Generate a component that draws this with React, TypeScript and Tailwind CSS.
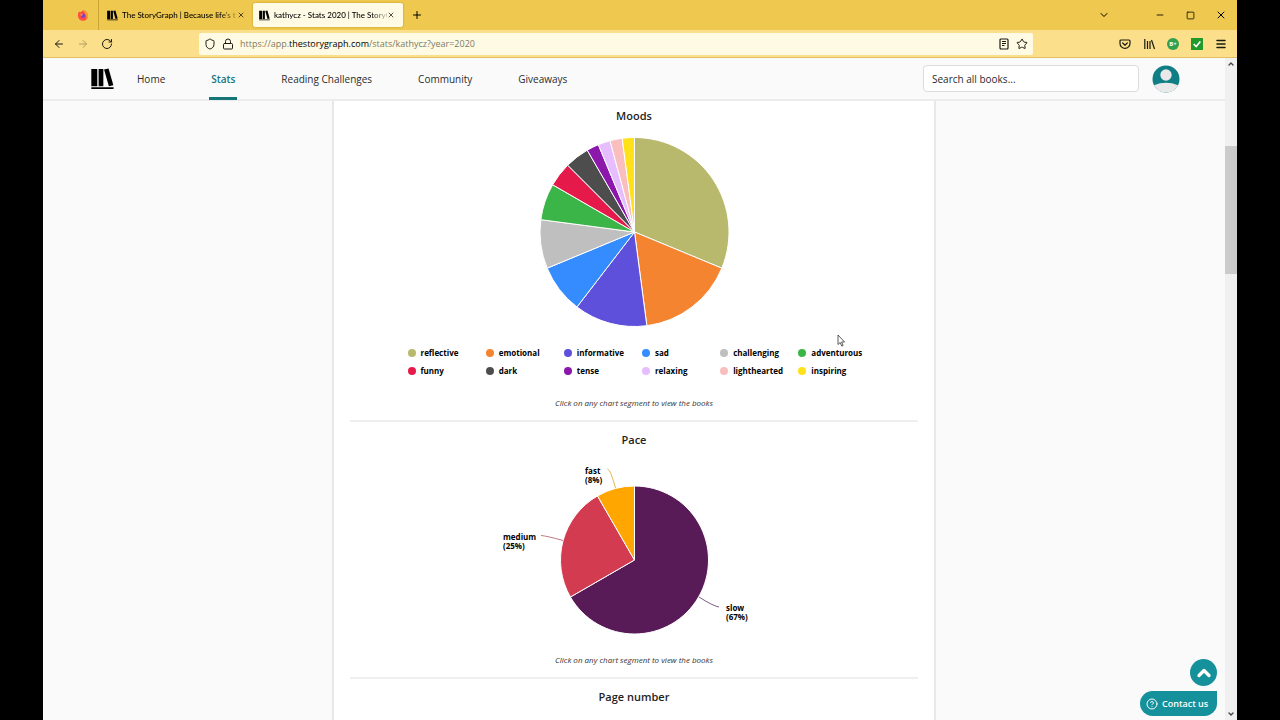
import React from 'react';
import { ArrowLeft, ArrowRight, ChevronDown, ChevronUp, CircleHelp, Lock, Menu, Minus, Plus, RotateCw, Shield, Square, Star, X } from 'lucide-react';

type Slice = { name: string; value: number; color: string };

const moods: Slice[] = [
  { name: 'reflective', value: 15, color: '#b8b96c' },
  { name: 'emotional', value: 8, color: '#f58430' },
  { name: 'informative', value: 6, color: '#5f50dc' },
  { name: 'sad', value: 4, color: '#358cff' },
  { name: 'challenging', value: 4, color: '#bfbfbf' },
  { name: 'adventurous', value: 3, color: '#3cb548' },
  { name: 'funny', value: 2, color: '#e6194b' },
  { name: 'dark', value: 2, color: '#4d4d4d' },
  { name: 'tense', value: 1, color: '#8c18ab' },
  { name: 'relaxing', value: 1, color: '#e6beff' },
  { name: 'lighthearted', value: 1, color: '#fabebe' },
  { name: 'inspiring', value: 1, color: '#ffe119' },
];

const pace: Slice[] = [
  { name: 'slow', value: 8, color: '#581b58' },
  { name: 'medium', value: 3, color: '#d33b51' },
  { name: 'fast', value: 1, color: '#ffa600' },
];

const navLinks = ['Home', 'Stats', 'Reading Challenges', 'Community', 'Giveaways'];

const Pie: React.FC<{ data: Slice[]; cx: number; cy: number; r: number }> = ({ data, cx, cy, r }) => {
  const total = data.reduce((sum, d) => sum + d.value, 0);
  let used = 0;
  return (
    <g stroke="#fff" strokeWidth="1" strokeLinejoin="round">
      {data.map((d) => {
        const start = (used / total) * 2 * Math.PI;
        used += d.value;
        const end = (used / total) * 2 * Math.PI;
        const large = end - start > Math.PI ? 1 : 0;
        const path = `M${cx} ${cy}L${cx + r * Math.sin(start)} ${cy - r * Math.cos(start)}A${r} ${r} 0 ${large} 1 ${cx + r * Math.sin(end)} ${cy - r * Math.cos(end)}Z`;
        return <path key={d.name} d={path} fill={d.color} />;
      })}
    </g>
  );
};

const BooksLogo: React.FC<{ className?: string }> = ({ className }) => (
  <svg viewBox="0 0 22 21" className={className} fill="currentColor" aria-hidden="true">
    <path d="M.3 1H6v16.500H.3zM7.300 1h4.500v16.500H7.300zM12.500 1.500l4.300-1 4.600 16-4.300 1zM.3 18.500h21.300V20H.3z" />
  </svg>
);

const FirefoxLogo: React.FC = () => (
  <svg viewBox="0 0 12 12" className="h-3 w-3" aria-hidden="true">
    <path d="M1 4.500Q1.500 3 2.500 2.500q.3.600 1 .8Q4.500 2 6 1.500 8 1 9 2.500 11.300 4 11 7a5 4.800 0 0 1-10 0Q.8 5.500 1 4.500z" fill="#ff4f45" />
    <path d="M6.500.8q.8 1.300 2.500 1.900Q11.300 4.500 11 7q-.4 2-2 3Q10.200 6.500 8 4.500 6.500 3 6.500.8z" fill="#ffa02e" />
    <circle cx="6" cy="6.800" r="2.200" fill="#8040c8" />
    <path d="M3 5q1.500-.6 3.200.6Q5 6 4.800 7.200 3.300 6.700 3 5z" fill="#ff8a2c" />
  </svg>
);

const ChartHint: React.FC = () => (
  <p className="text-center text-[8px] italic leading-4 text-[#333]">Click on any chart segment to view the books</p>
);

const TabTitle: React.FC<{ children: React.ReactNode }> = ({ children }) => (
  <span className="min-w-0 flex-1 whitespace-nowrap bg-linear-to-r from-black from-85% to-black/20 bg-clip-text font-['Lato'] text-[8px] font-medium leading-4 text-transparent">
    {children}
  </span>
);

const TabBar: React.FC = () => (
  <div className="flex h-[30px] shrink-0 items-center bg-[#efc94f] text-black">
    <button className="flex h-full w-14 items-center justify-end border-r border-[#c9a536] pr-[9px]" aria-label="Pinned tab">
      <FirefoxLogo />
    </button>
    <div className="mr-1 flex h-6 w-[150px] items-center pl-2 pr-1">
      <BooksLogo className="mr-1 h-[11px] w-[11px] shrink-0" />
      <TabTitle>The StoryGraph | Because life's t</TabTitle>
      <button className="shrink-0" aria-label="Close tab"><X className="h-2 w-2" /></button>
    </div>
    <div className="flex h-6 w-[150px] items-center rounded-xs bg-[#fffae4] pl-1.5 pr-2 shadow-[0_0_2px_#b08d20]">
      <BooksLogo className="mr-1 h-[11px] w-[11px] shrink-0" />
      <TabTitle>kathycz - Stats 2020 | The StoryG</TabTitle>
      <button className="shrink-0" aria-label="Close tab"><X className="h-2 w-2" /></button>
    </div>
    <button className="ml-2" aria-label="New tab"><Plus className="h-3 w-3" /></button>
    <div className="ml-auto flex items-center pr-2.5">
      <button className="mr-[45px]" aria-label="List all tabs"><ChevronDown className="h-3 w-3" /></button>
      <button className="mr-[21px]" aria-label="Minimize"><Minus className="h-2.5 w-2.5" /></button>
      <button className="mr-5" aria-label="Maximize"><Square className="h-[9px] w-[9px]" /></button>
      <button aria-label="Close window"><X className="h-3 w-3" strokeWidth={2} /></button>
    </div>
  </div>
);

const Toolbar: React.FC = () => (
  <div className="flex h-7 shrink-0 items-center border-b border-[#e2c060] bg-[#fbdf8b] px-2.5 text-[#1c1b12]">
    <div className="flex w-[146px] items-center gap-3">
      <button aria-label="Back"><ArrowLeft className="h-3 w-3" /></button>
      <button aria-label="Forward" disabled className="text-[#b09b5c]"><ArrowRight className="h-3 w-3" /></button>
      <button aria-label="Reload"><RotateCw className="h-3 w-3" /></button>
    </div>
    <div className="flex h-[22px] flex-1 items-center gap-1.5 rounded-xs bg-[#fffae4] px-[5px]">
      <Shield className="h-3 w-3" />
      <Lock className="h-3 w-3" />
      <div className="flex-1 text-[9px] leading-4 text-[#7c7a66]">
        https://app.<span className="text-black">thestorygraph.com</span>/stats/kathycz?year=2020
      </div>
      <button aria-label="Reader view">
        <svg viewBox="0 0 12 12" className="h-3 w-3" fill="none" stroke="currentColor" strokeWidth="1.200">
          <rect x="2" y="1" width="8" height="10" rx="1" />
          <path d="M4 3.500h4M4 5.500h4M4 7.500h2.500" />
        </svg>
      </button>
      <button aria-label="Bookmark"><Star className="h-3 w-3" /></button>
    </div>
    <div className="ml-[86px] flex items-center gap-3">
      <button aria-label="Pocket">
        <svg viewBox="0 0 12 12" className="h-3 w-3" fill="none" stroke="currentColor" strokeWidth="1.200" strokeLinecap="round" strokeLinejoin="round">
          <path d="M2 2h8a1 1 0 0 1 1 1v2.500a5 4.800 0 0 1-10 0V3a1 1 0 0 1 1-1z" />
          <path d="M3.700 5 6 7.200 8.300 5" />
        </svg>
      </button>
      <button aria-label="Library">
        <svg viewBox="0 0 12 12" className="h-3 w-3" fill="none" stroke="currentColor" strokeWidth="1.200">
          <path d="M1.800 1v10M4.500 3v8M7 3v8M8.500 2l3 9" />
        </svg>
      </button>
      <button className="flex h-3 w-3 items-center justify-center rounded-full bg-[#32a04c] text-[6px] font-bold leading-none text-white">B+</button>
      <button className="flex h-3 w-3 items-center justify-center bg-[#219a2a] text-white" aria-label="Checker">
        <svg viewBox="0 0 12 12" className="h-2.5 w-2.5" fill="none" stroke="currentColor" strokeWidth="2">
          <path d="M2 6l3 3 5-6" />
        </svg>
      </button>
      <button aria-label="Menu"><Menu className="h-3 w-3" strokeWidth={3} /></button>
    </div>
  </div>
);

const SiteHeader: React.FC = () => (
  <header className="flex h-[43px] shrink-0 items-center border-b-2 border-[#ececec] bg-[#fafafa] pl-12 pr-[45px]">
    <a href="#" aria-label="The StoryGraph"><BooksLogo className="h-[22px] w-[23px]" /></a>
    <nav className="ml-[21px] flex h-[43px] flex-1 gap-[42px]">
      {navLinks.map((link) => (
        <a
          key={link}
          href="#"
          className={
            link === 'Stats'
              ? 'flex items-center border-b-3 border-[#14757b] px-0.5 pt-[5px] text-[10px] font-semibold text-[#14757b]'
              : 'flex items-center px-0.5 pt-0.5 text-[10px] text-[#2b2b2b]'
          }
        >
          {link}
        </a>
      ))}
    </nav>
    <input
      type="text"
      aria-label="Search all books"
      placeholder="Search all books..."
      className="h-[27px] w-[216px] rounded-sm border border-[#dcdcdc] bg-white px-2 text-[10px] text-[#2b2b2b] placeholder:text-[#2b2b2b]"
    />
    <button className="ml-[13px]" aria-label="Profile">
      <svg viewBox="0 0 28 28" className="h-7 w-7">
        <circle cx="14" cy="14" r="13.500" fill="#0f7e85" />
        <circle cx="14" cy="10" r="5.700" fill="#e9e9e9" />
        <path d="M2 20.200Q8 17.800 14 17.800t12 2.400a13.500 13.500 0 0 1-24 0z" fill="#e9e9e9" />
      </svg>
    </button>
  </header>
);

const MoodsSection: React.FC = () => (
  <section className="relative flex flex-col items-center border-b-2 border-[#efefef] pt-[5px] pb-[9px]">
    <h2 className="text-[11px] font-semibold leading-5 text-[#1f1f1f]">Moods</h2>
    <svg viewBox="0 0 190 190" className="mt-[11px] h-[190px] w-[190px]" role="img" aria-label="Moods chart">
      <Pie data={moods} cx={95.5} cy={95} r={94.5} />
    </svg>
    <ul className="mt-[17px] mb-[15px] grid w-[485px] grid-cols-6 pl-4">
      {moods.map((m) => (
        <li key={m.name} className="flex h-[18px] items-center gap-[5px] text-[8px] font-bold text-black">
          <span className="h-2 w-2 rounded-full" style={{ backgroundColor: m.color }} />
          {m.name}
        </li>
      ))}
    </ul>
    <ChartHint />
    {/* mouse pointer */}
    <svg viewBox="0 0 9 13" className="absolute right-[72px] bottom-[73px] h-[13px] w-[9px]" fill="#fff" stroke="#333" strokeWidth="0.800">
      <path d="M1 1v9.500l2.200-2 1.500 3.600 1.400-.6-1.500-3.500h3z" />
    </svg>
  </section>
);

const PaceSection: React.FC = () => (
  <section className="flex flex-col items-center border-b-2 border-[#efefef] pt-2 pb-[9px]">
    <h2 className="text-[11px] font-semibold leading-5 text-[#1f1f1f]">Pace</h2>
    <svg viewBox="0 0 300 180" className="mt-2.5 mb-3 h-[180px] w-[300px]" role="img" aria-label="Pace chart">
      <Pie data={pace} cx={150.5} cy={100} r={74} />
      <g fill="none" strokeWidth="0.900">
        <path d="M123.500 9q3 .5 8 19" stroke="#e0b040" />
        <path d="M57 75.500q6 .5 22 5" stroke="#b26a78" />
        <path d="M215 137q14 9 20 10" stroke="#6c4a70" />
      </g>
      <g className="text-[8px] font-bold" fill="#000">
        <text x="101" y="14">fast</text>
        <text x="101" y="23">(8%)</text>
        <text x="19" y="80">medium</text>
        <text x="19" y="89">(25%)</text>
        <text x="242" y="151">slow</text>
        <text x="242" y="160">(67%)</text>
      </g>
    </svg>
    <ChartHint />
  </section>
);

export default function App() {
  return (
    <div className="flex h-screen flex-col overflow-hidden bg-black px-[43px] font-['Open_Sans',sans-serif]">
      <TabBar />
      <Toolbar />
      <div className="flex min-h-0 flex-1">
        <div className="relative flex min-w-0 flex-1 flex-col bg-[#fafafa]">
          <SiteHeader />
          <main className="min-h-0 flex-1 overflow-hidden">
            <div className="mx-auto min-h-full w-full max-w-[604px] border-x-2 border-[#e8e8e8] bg-white px-4">
              <MoodsSection />
              <PaceSection />
              <section className="pt-2">
                <h2 className="text-center text-[11px] font-semibold leading-5 text-[#1f1f1f]">Page number</h2>
              </section>
            </div>
          </main>
          {/* Floating actions */}
          <div className="absolute right-2 bottom-1 flex flex-col items-end gap-[5px]">
            <button className="flex h-[27px] w-[27px] items-center justify-center rounded-full bg-[#14919b] text-white" aria-label="Back to top">
              <ChevronUp className="h-5 w-5" strokeWidth={4} />
            </button>
            <button className="flex h-[25px] w-[77px] items-center gap-1 rounded-full rounded-tr-sm bg-[#14919b] pl-1.5 text-[9px] font-semibold text-white">
              <CircleHelp className="h-3 w-3" />
              Contact us
            </button>
          </div>
        </div>
        {/* Scrollbar */}
        <div className="flex w-3 shrink-0 flex-col items-center bg-[#f0f0f0] text-[#444]">
          <ChevronUp className="mt-0.5 h-2 w-2" strokeWidth={4} />
          <div className="mt-[78px] h-32 w-full bg-[#cbcbcb]" />
          <ChevronDown className="mt-auto mb-0.5 h-2 w-2" strokeWidth={4} />
        </div>
      </div>
    </div>
  );
}
